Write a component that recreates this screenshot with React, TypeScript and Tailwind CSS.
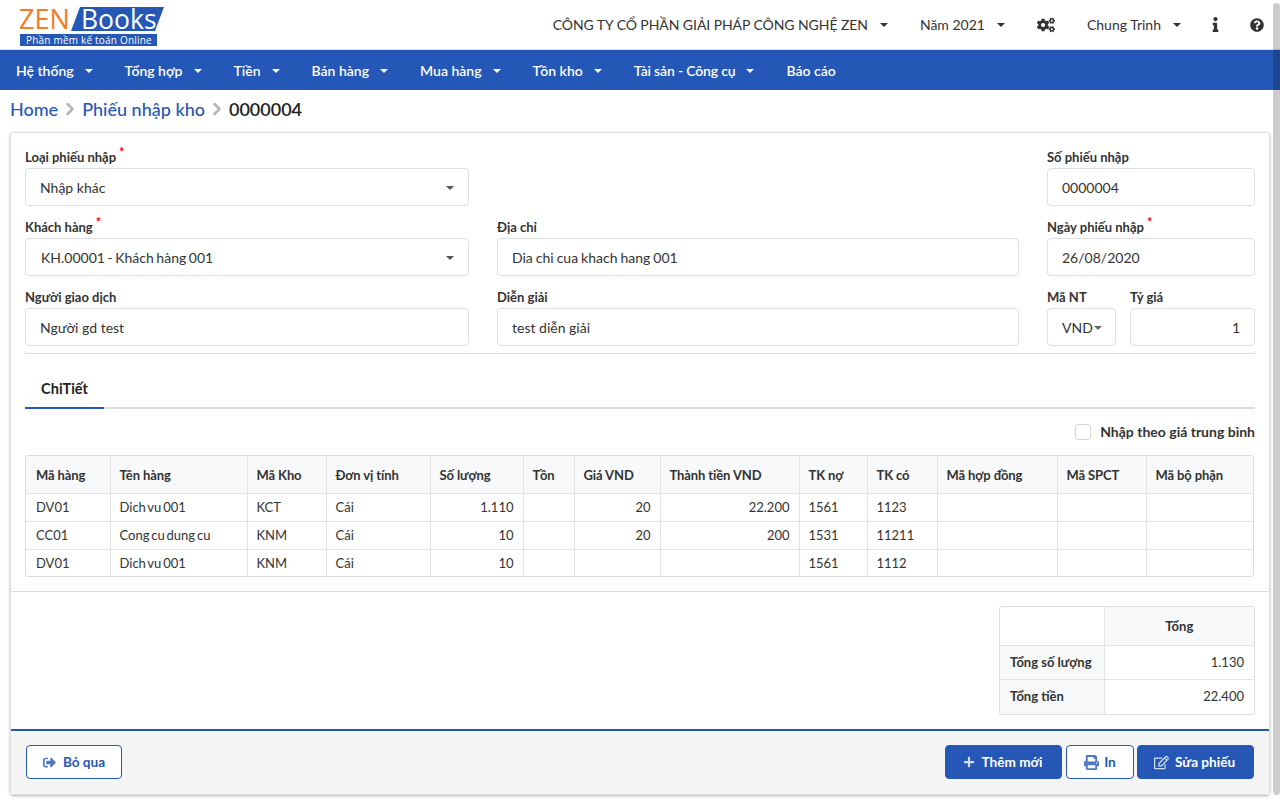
import { FaCogs, FaInfo, FaQuestionCircle, FaSignOutAlt, FaPlus, FaPrint, FaRegEdit } from "react-icons/fa";
import { LuChevronRight } from "react-icons/lu";

const navItems = ["Hệ thống", "Tổng hợp", "Tiền", "Bán hàng", "Mua hàng", "Tồn kho"];

const columns = [
  { label: "Mã hàng", width: 84 },
  { label: "Tên hàng", width: 137 },
  { label: "Mã Kho", width: 79 },
  { label: "Đơn vị tính", width: 104 },
  { label: "Số lượng", width: 93 },
  { label: "Tồn", width: 51 },
  { label: "Giá VND", width: 86 },
  { label: "Thành tiền VND", width: 139 },
  { label: "TK nợ", width: 68 },
  { label: "TK có", width: 70 },
  { label: "Mã hợp đồng", width: 120 },
  { label: "Mã SPCT", width: 89 },
  { label: "Mã bộ phận", width: 109 },
];

const rows = [
  ["DV01", "Dich vu 001", "KCT", "Cái", "1.110", "", "20", "22.200", "1561", "1123", "", "", ""],
  ["CC01", "Cong cu dung cu", "KNM", "Cái", "10", "", "20", "200", "1531", "11211", "", "", ""],
  ["DV01", "Dich vu 001", "KNM", "Cái", "10", "", "", "", "1561", "1112", "", "", ""],
];

const rightAligned = [4, 6, 7];

function Caret({ className = "" }: { className?: string }) {
  return <span className={`inline-block w-0 h-0 border-x-4 border-t-4 border-x-transparent ${className}`} />;
}

function Logo() {
  return (
    <svg width="150" height="46" viewBox="0 0 150 46" className="block">
      <text x="-1" y="27" fontFamily="'Open Sans', sans-serif" fontSize="27" fontWeight="500" fill="#f47b28">ZEN</text>
      <polygon points="60,5 144,5 135,29 51,29" fill="#2557b7" />
      <text x="61" y="27" fontFamily="'Open Sans', sans-serif" fontSize="26.5" fontWeight="500" fill="#ffffff">Books</text>
      <rect x="0" y="32" width="137" height="12" fill="#2557b7" />
      <text x="6" y="42" fontFamily="'Open Sans', sans-serif" fontSize="10" letterSpacing="0.2" fill="#ffffff">Phần mềm kế toán Online</text>
    </svg>
  );
}

function Label({ text, required }: { text: string; required?: boolean }) {
  return (
    <div className="h-[22px] text-[13px] leading-[22px] font-bold text-[#333] whitespace-nowrap">
      {text}
      {required && <span className="relative -top-[5px] ml-[3px] text-[13px] text-red-600">*</span>}
    </div>
  );
}

function Field({ value, caret, right, className = "pl-[14px]" }: { value: string; caret?: boolean; right?: boolean; className?: string }) {
  return (
    <div className={`h-[38px] flex items-center border border-[#dcdfe3] rounded bg-white text-sm text-[#333] pt-px pr-[14px] ${right ? "justify-end" : "justify-between"} ${className}`}>
      <span>{value}</span>
      {caret && <Caret className="border-t-[#555]" />}
    </div>
  );
}

function Button({ icon, label, primary, className }: { icon: React.ReactNode; label: string; primary?: boolean; className: string }) {
  return (
    <button className={`h-[34px] flex items-center justify-center rounded border border-[#2557b7] text-[13.6px] font-bold ${primary ? "bg-[#2557b7] text-white pr-[2px]" : "bg-white text-[#2557b7]"} ${className}`}>
      <span className="opacity-80">{icon}</span>
      {label}
    </button>
  );
}

export default function App() {
  return (
    <div className="relative h-[800px] w-[1280px] overflow-hidden bg-white font-['Lato',sans-serif] text-[#333]">
      {/* Top bar */}
      <header className="h-[50px] flex items-center pl-5 border-b border-[#dddddd] text-sm">
        <Logo />
        <div className="ml-auto flex items-center">
          <span className="tracking-[-0.07px]">CÔNG TY CỔ PHẦN GIẢI PHÁP CÔNG NGHỆ ZEN</span>
          <Caret className="ml-3 border-t-[#333]" />
          <span className="ml-8">Năm 2021</span>
          <Caret className="ml-3 border-t-[#333]" />
          <FaCogs className="ml-8 text-[18px] text-[#333]" />
          <span className="ml-8">Chung Trinh</span>
          <Caret className="ml-3 border-t-[#333]" />
          <FaInfo className="ml-[27px] text-[15px] text-[#333]" />
          <FaQuestionCircle className="ml-[27px] mr-[16px] text-[14px] text-[#333]" />
        </div>
      </header>

      {/* Main nav */}
      <nav className="h-10 flex items-center pl-4 pt-[2px] bg-[#2557b7] text-sm font-semibold text-white">
        {navItems.map((item) => (
          <div key={item} className="flex items-center mr-8">
            <span>{item}</span>
            <Caret className="ml-[11px] border-t-white" />
          </div>
        ))}
        <div className="flex items-center mr-8">
          <span className="tracking-[-0.18px]">Tài sản - Công cụ</span>
          <Caret className="ml-[11px] border-t-white" />
        </div>
        <span>Báo cáo</span>
      </nav>

      {/* Breadcrumb */}
      <div className="h-[40px] flex items-center pl-[10px] pb-[2px] text-lg">
        <span className="font-medium text-[#2557b7]">Home</span>
        <LuChevronRight strokeWidth={3} className="mx-[2px] text-[20px] text-[#b5b5b5]" />
        <span className="font-medium text-[#2557b7]">Phiếu nhập kho</span>
        <LuChevronRight strokeWidth={3} className="mx-[2px] text-[20px] text-[#b5b5b5]" />
        <span className="font-semibold text-[#222]">0000004</span>
      </div>

      {/* Form card */}
      <main className="mx-[10px] mt-[2px] w-[1260px] h-[663px] border border-[#dddddd] rounded flex flex-col shadow-[0_1px_3px_rgba(0,0,0,0.3)]">
        <div className="px-[14px] pt-[13px]">
          <div className="grid grid-cols-[444px_522px_208px] gap-x-7 gap-y-[10px]">
            <div>
              <Label text="Loại phiếu nhập" required />
              <Field value="Nhập khác" caret />
            </div>
            <div />
            <div>
              <Label text="Số phiếu nhập" />
              <Field value="0000004" />
            </div>
            <div>
              <Label text="Khách hàng" required />
              <Field value="KH.00001 - Khách hàng 001" caret className="pl-[15px] [word-spacing:-1px]" />
            </div>
            <div>
              <Label text="Địa chỉ" />
              <Field value="Dia chi cua khach hang 001" className="pl-[14px] [word-spacing:-0.6px]" />
            </div>
            <div>
              <Label text="Ngày phiếu nhập" required />
              <Field value="26/08/2020" />
            </div>
            <div>
              <Label text="Người giao dịch" />
              <Field value="Người gd test" />
            </div>
            <div>
              <Label text="Diễn giải" />
              <Field value="test diễn giải" />
            </div>
            <div className="grid grid-cols-[69px_125px] gap-x-[14px]">
              <div>
                <Label text="Mã NT" />
                <div className="h-[38px] flex items-center pl-[14px] pt-px border border-[#dcdfe3] rounded text-sm">
                  VND
                  <Caret className="ml-px border-t-[#666]" />
                </div>
              </div>
              <div>
                <Label text="Tỷ giá" />
                <Field value="1" right />
              </div>
            </div>
          </div>

          <div className="mt-[7px] border-t border-[#dddddd]" />

          {/* Tabs */}
          <div className="mt-4 h-[39px] border-b-2 border-[#dddddd]">
            <div className="w-[79px] h-[39px] flex items-center justify-center border-b-2 border-[#2557b7] text-[14.5px] font-bold text-[#222]">
              ChiTiết
            </div>
          </div>

          <div className="mt-[14px] h-[18px] flex items-center justify-end gap-[9px]">
            <span className="w-4 h-4 border border-[#d5d5d5] rounded-[3px] bg-white" />
            <span className="text-sm font-bold">Nhập theo giá trung bình</span>
          </div>

          {/* Detail table */}
          <div className="mt-[14px] w-[1229px] border border-[#dddddd] rounded-[3px] overflow-hidden">
            <table className="table-fixed w-[1229px] border-collapse text-[13px]">
              <colgroup>
                {columns.map((col) => (
                  <col key={col.label} style={{ width: col.width }} />
                ))}
              </colgroup>
              <thead>
                <tr className="h-[37px] bg-[#f8f9fa]">
                  {columns.map((col) => (
                    <th key={col.label} className="px-[9px] first:pl-[10px] pt-[2px] text-left font-bold tracking-[-0.1px] whitespace-nowrap border-r border-b border-[#e3e3e3] last:border-r-0">
                      {col.label}
                    </th>
                  ))}
                </tr>
              </thead>
              <tbody>
                {rows.map((row, i) => (
                  <tr key={i} className={i === 2 ? "h-[27px]" : "h-[28px]"}>
                    {row.map((cell, j) => (
                      <td
                        key={j}
                        className={`px-[9px] first:pl-[10px] pb-0 whitespace-nowrap [word-spacing:-1.5px] border-r border-b border-[#e3e3e3] last:border-r-0 ${i === 0 ? "pt-[2px]" : "pt-px"} ${i === 2 ? "border-b-0" : ""} ${rightAligned.includes(j) ? "text-right" : "text-left"}`}
                      >
                        {cell}
                      </td>
                    ))}
                  </tr>
                ))}
              </tbody>
            </table>
          </div>
        </div>

        <div className="mt-[14px] border-t border-[#dddddd]" />

        {/* Totals */}
        <div className="mt-[14px] mr-[14px] self-end w-[256px] border border-[#dddddd] rounded-[3px] overflow-hidden">
          <table className="table-fixed w-full border-collapse text-[13px]">
            <colgroup>
              <col className="w-[104px]" />
              <col />
            </colgroup>
            <tbody>
              <tr className="h-[38px]">
                <td className="border-r border-b border-[#e3e3e3]" />
                <td className="bg-[#f8f9fa] pt-px text-center font-bold border-b border-[#e3e3e3]">Tổng</td>
              </tr>
              <tr className="h-[34px]">
                <td className="pl-[10px] pt-px bg-[#f8f9fa] font-bold whitespace-nowrap border-r border-b border-[#e3e3e3]">Tổng số lượng</td>
                <td className="pr-[10px] pt-px text-right border-b border-[#e3e3e3]">1.130</td>
              </tr>
              <tr className="h-[35px]">
                <td className="pl-[10px] bg-[#f8f9fa] font-bold border-r border-[#e3e3e3]">Tổng tiền</td>
                <td className="pr-[10px] text-right">22.400</td>
              </tr>
            </tbody>
          </table>
        </div>

        {/* Footer actions */}
        <div className="mt-auto h-[65px] flex items-center px-[15px] pb-px bg-[#f5f5f5] border-t-2 border-[#2557b7]">
          <Button icon={<FaSignOutAlt className="text-[13px] mr-[7px]" />} label="Bỏ qua" className="w-[96px]" />
          <div className="ml-auto flex items-center gap-[3px]">
            <Button icon={<FaPlus className="text-[12px] mr-[7px]" />} label="Thêm mới" primary className="w-[117px] mr-px" />
            <Button icon={<FaPrint className="text-[15px] mr-[5px]" />} label="In" className="w-[68px]" />
            <Button icon={<FaRegEdit className="text-[15px] mr-[6px]" />} label="Sửa phiếu" primary className="w-[117px]" />
          </div>
        </div>
      </main>

      {/* Overlay scrollbar */}
      <div className="absolute top-[3px] right-0 w-[7px] h-[792px] rounded-full bg-black/20" />
    </div>
  );
}
